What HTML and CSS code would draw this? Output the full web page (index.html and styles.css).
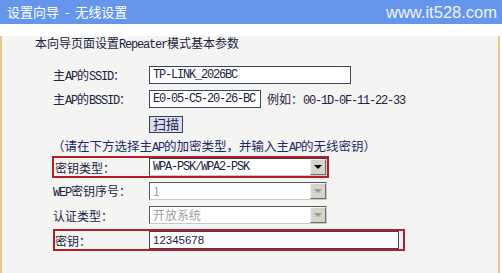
FILE: index.html
```html
<!DOCTYPE html>
<html lang="zh-CN">
  <head>
    <meta charset="UTF-8" />
    <title>设置向导 - 无线设置</title>
    <link rel="stylesheet" href="styles.css">
  </head>
  <body>
    <div class="header">
      <span class="header-title">设置向导 - 无线设置</span>
      <span class="site">www.it528.com</span>
    </div>

    <div class="panel">
      <p class="intro">本向导页面设置<span class="en">Repeater</span>模式基本参数</p>

      <div class="form">
        <div class="row">
          <label class="label">主<span class="en">AP</span>的<span class="en">SSID</span>：</label>
          <div class="input input-ssid">TP-LINK_2026BC</div>
        </div>

        <div class="row">
          <label class="label">主<span class="en">AP</span>的<span class="en">BSSID</span>：</label>
          <div class="input input-bssid">E0-05-C5-20-26-BC</div>
          <span class="hint">例如：<span class="en">00-1D-0F-11-22-33</span></span>
        </div>

        <div class="row">
          <span class="label"></span>
          <button class="button">扫描</button>
        </div>

        <div class="row row-note">
          <span class="note">（请在下方选择主<span class="en">AP</span>的加密类型，并输入主<span class="en">AP</span>的无线密钥）</span>
        </div>

        <div class="row">
          <div class="mark mark-type">
            <label class="label">密钥类型：</label>
            <div class="select">
              <span class="select-value en">WPA-PSK/WPA2-PSK</span>
              <span class="arrow"></span>
            </div>
          </div>
        </div>

        <div class="row">
          <label class="label"><span class="en">WEP</span>密钥序号：</label>
          <div class="select is-disabled">
            <span class="select-value">1</span>
            <span class="arrow"></span>
          </div>
        </div>

        <div class="row">
          <label class="label">认证类型：</label>
          <div class="select is-disabled">
            <span class="select-value">开放系统</span>
            <span class="arrow"></span>
          </div>
        </div>

        <div class="row">
          <div class="mark mark-key">
            <label class="label label-key">密钥：</label>
            <div class="input input-key">12345678</div>
          </div>
        </div>
      </div>
    </div>
  </body>
</html>
```

FILE: styles.css
```css
:root {
  --header-blue: #6596ec;
  --panel-bg: #f4f4f3;
  --panel-edge: #ebc78f;
  --text-color: #1c2340;
  --note-color: #1a2a6a;
  --mark-red: #b51d28;
  --field-border: #3c4660;
}

* {
  margin: 0;
  padding: 0;
  box-sizing: border-box;
}

body {
  width: 502px;
  height: 273px;
  background-color: #ffffff;
  font-family: 'Noto Sans CJK SC', sans-serif;
  font-size: 12px;
  color: var(--text-color);
  overflow: hidden;
}

.en {
  font-family: 'Liberation Mono', monospace;
  font-size: 12px;
  letter-spacing: -1.2px;
}

.header {
  height: 24px;
  background-color: var(--header-blue);
  display: flex;
  align-items: center;
  justify-content: space-between;
  padding: 0 5px 0 7px;
  color: #ffffff;
}

.header-title {
  font-size: 13px;
  line-height: 24px;
  word-spacing: 3px;
}

.site {
  font-family: 'Liberation Sans', Arial, sans-serif;
  font-size: 16.5px;
  color: #f2f4fa;
}

.panel {
  width: 500px;
  height: 247px;
  background-color: var(--panel-bg);
  border-left: 2px solid var(--panel-edge);
  border-right: 2px solid var(--panel-edge);
  border-bottom: 2px solid var(--panel-edge);
}

.intro {
  margin: 12px 0 0 33px;
  line-height: 14px;
}

.form {
  margin-top: 11px;
  padding-left: 51px;
}

.row {
  height: 24px;
  display: flex;
  align-items: center;
}

.row-note {
  height: 20px;
}

.note {
  color: var(--note-color);
  font-size: 12.5px;
  margin-left: -1px;
}

.label {
  width: 96px;
  flex-shrink: 0;
  white-space: nowrap;
}

.input {
  height: 18px;
  background-color: #ffffff;
  border: 1px solid var(--field-border);
  padding-left: 3px;
  line-height: 16px;
  font-family: 'Liberation Mono', monospace;
  font-size: 12px;
  letter-spacing: -1.2px;
  white-space: nowrap;
  overflow: hidden;
}

.input-ssid {
  width: 202px;
}

.input-bssid {
  width: 112px;
}

.hint {
  margin-left: 6px;
}

.input-key {
  width: 250px;
  font-family: 'Liberation Sans', Arial, sans-serif;
  font-size: 11.5px;
  letter-spacing: 0;
}

.button {
  width: 34px;
  height: 17px;
  margin-top: 2px;
  background-color: #dcdcf2;
  border: 1px solid #3a3f55;
  font-family: 'Noto Sans CJK SC', sans-serif;
  font-size: 13px;
  line-height: 14px;
  color: var(--text-color);
}

.select {
  width: 178px;
  height: 18px;
  display: flex;
  align-items: center;
  justify-content: space-between;
  background-color: #ffffff;
  border-top: 1px solid #404040;
  border-left: 1px solid #404040;
  border-right: 1px solid #c8c8c8;
  border-bottom: 1px solid #c8c8c8;
  padding-left: 3px;
}

.select-value {
  line-height: 16px;
  white-space: nowrap;
}

.arrow {
  width: 16px;
  height: 16px;
  background-color: #d6d3cb;
  border-top: 1px solid #f4f4f4;
  border-left: 1px solid #f4f4f4;
  border-right: 1px solid #707070;
  border-bottom: 1px solid #707070;
  display: flex;
  align-items: center;
  justify-content: center;
}

.arrow::after {
  content: '';
  border-left: 4px solid transparent;
  border-right: 4px solid transparent;
  border-top: 4px solid #000000;
}

.is-disabled {
  border-top-color: #5a5a5a;
  border-left-color: #5a5a5a;
}

.is-disabled .select-value {
  color: #a0a0a0;
}

.is-disabled .arrow::after {
  border-top-color: #9a9a9a;
}

.mark {
  display: flex;
  align-items: center;
  border: 2px solid var(--mark-red);
  height: 22px;
}

.mark-type {
  margin: 1px 0 1px -1px;
}

.mark-type .label {
  width: 95px;
  padding-left: 1px;
}

.mark-key {
  margin-top: 2px;
  padding-right: 4px;
}

.label-key {
  width: 94px;
}
```
